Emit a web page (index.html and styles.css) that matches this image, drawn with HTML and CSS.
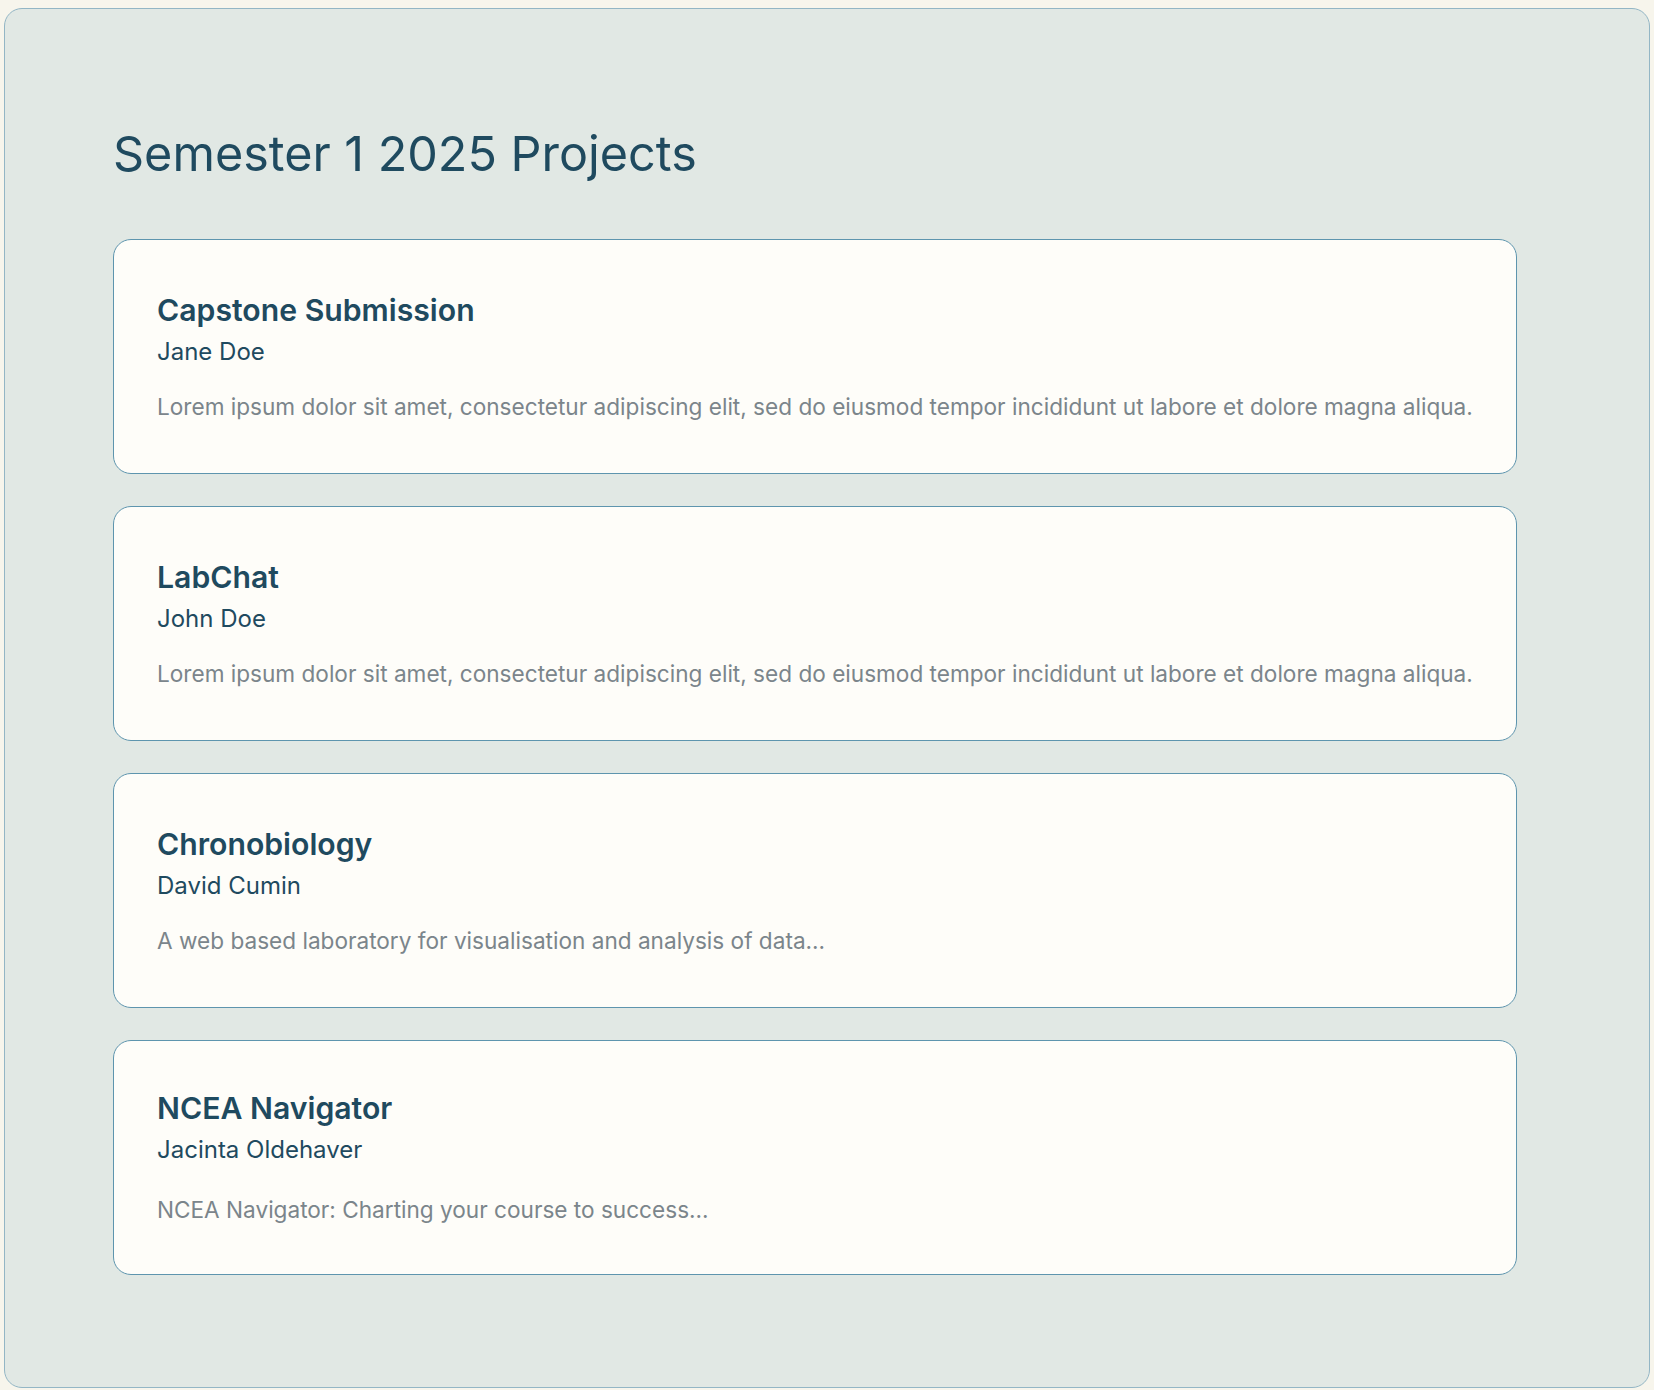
FILE: index.html
```html
<!DOCTYPE html>
<html lang="en">
<head>
<meta charset="utf-8">
<title>Semester 1 2025 Projects</title>
<link rel="stylesheet" href="styles.css">
</head>
<body>
<main class="panel">
  <h1 class="page-title">Semester 1 2025 Projects</h1>
  <ul class="project-list">
    <li class="card">
      <h2 class="card-title">Capstone Submission</h2>
      <p class="card-author">Jane Doe</p>
      <p class="card-desc">Lorem ipsum dolor sit amet, consectetur adipiscing elit, sed do eiusmod tempor incididunt ut labore et dolore magna aliqua.</p>
    </li>
    <li class="card">
      <h2 class="card-title">LabChat</h2>
      <p class="card-author">John Doe</p>
      <p class="card-desc">Lorem ipsum dolor sit amet, consectetur adipiscing elit, sed do eiusmod tempor incididunt ut labore et dolore magna aliqua.</p>
    </li>
    <li class="card">
      <h2 class="card-title">Chronobiology</h2>
      <p class="card-author">David Cumin</p>
      <p class="card-desc">A web based laboratory for visualisation and analysis of data...</p>
    </li>
    <li class="card card-alt">
      <h2 class="card-title">NCEA Navigator</h2>
      <p class="card-author">Jacinta Oldehaver</p>
      <p class="card-desc">NCEA Navigator: Charting your course to success...</p>
    </li>
  </ul>
</main>
</body>
</html>
```

FILE: styles.css
```css
html, body {
  margin: 0;
  padding: 0;
}

body {
  background: #f7f5ec;
  font-family: Inter, "Noto Sans", "Liberation Sans", sans-serif;
  color: #1f4a5f;
}

.panel {
  margin: 8px 4px 3px;
  border: 1px solid #93b6c5;
  border-radius: 18px;
  background: #e1e8e4;
  padding: 116px 108px 112px;
}

.page-title {
  margin: 0 0 56px;
  font-size: 48.5px;
  line-height: 58px;
  font-weight: 400;
  color: #1f4a5f;
}

.project-list {
  list-style: none;
  margin: 0;
  padding: 0;
  width: 1404px;
  display: flex;
  flex-direction: column;
  gap: 32px;
}

.card {
  box-sizing: border-box;
  height: 235px;
  background: #fefdf9;
  border: 1px solid #5e95ae;
  border-radius: 18px;
  padding: 52px 43px 0;
}

.card-title {
  margin: 0 0 9px;
  font-size: 30.2px;
  line-height: 36px;
  font-weight: 600;
  color: #1f4a5f;
}

.card-author {
  margin: 0 0 26px;
  font-size: 24px;
  line-height: 30px;
  font-weight: 400;
  color: #1f4a5f;
}

.card-desc {
  margin: 0;
  font-size: 22.6px;
  line-height: 28px;
  color: #7b858b;
}

.card-alt {
  padding-top: 49px;
}

.card-alt .card-author {
  margin-bottom: 31px;
}
```
